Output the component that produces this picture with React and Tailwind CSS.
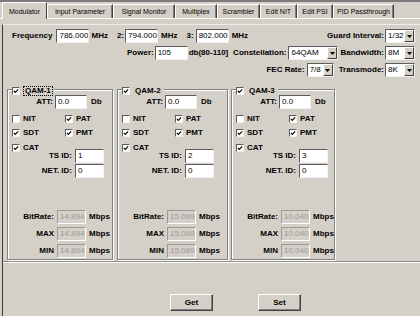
import React from "react";
import clsx from "clsx";

const tabs = [
  { name: "Modulator", w: "w-[45px]", active: true },
  { name: "Input Parameter", w: "w-[66px]" },
  { name: "Signal Monitor", w: "w-[62px]" },
  { name: "Multiplex", w: "w-[42px]" },
  { name: "Scrambler", w: "w-[43px]" },
  { name: "Edit NIT", w: "w-[37px]" },
  { name: "Edit PSI", w: "w-[36px]" },
  { name: "PID Passthrough", w: "w-[61px]" },
];

const groups = [
  { title: "QAM-1", focus: true, w: "w-[106px]", ts: "1", rate: "14.894" },
  { title: "QAM-2", w: "w-[111px]", ts: "2", rate: "15.089" },
  { title: "QAM-3", w: "w-[104px]", ts: "3", rate: "10.040" },
];

const sunken = "border border-t-[#5c5c5c] border-l-[#5c5c5c] border-b-[#f2f2f2] border-r-[#f2f2f2]";

const Field = ({ w, value, disabled }) => (
  <div
    className={clsx(
      "h-[14px] px-[2px] text-[8px] font-normal leading-[11px] whitespace-nowrap overflow-hidden",
      disabled
        ? "bg-[#d4d0c8] text-[#9a9a9a] border border-t-[#9a9a9a] border-l-[#9a9a9a] border-b-white border-r-white"
        : clsx("bg-white text-black", sunken),
      w
    )}
  >
    {value}
  </div>
);

const Select = ({ w, value }) => (
  <div className={clsx("h-[14px] flex bg-white", sunken, w)}>
    <span className="flex-1 pl-[2px] text-[8px] font-normal leading-[11px]">{value}</span>
    <span className="w-[10px] h-full bg-[#d4d0c8] border border-t-white border-l-white border-r-[#404040] border-b-[#404040] flex items-center justify-center">
      <svg width="5" height="3" viewBox="0 0 5 3">
        <path d="M0 0H5L2.5 3Z" fill="#000" />
      </svg>
    </span>
  </div>
);

const Check = ({ on }) => (
  <span className={clsx("w-[8px] h-[8px] bg-white flex items-center justify-center shrink-0", sunken)}>
    {on && (
      <svg viewBox="0 0 7 7" className="w-[6px] h-[6px]">
        <path d="M1 3.3 L2.7 5.2 L6 1.6" stroke="#000" strokeWidth="1.3" fill="none" />
      </svg>
    )}
  </span>
);

const CheckLabel = ({ on, label }) => (
  <div className="flex items-center gap-[3px] whitespace-nowrap">
    <Check on={on} />
    <span>{label}</span>
  </div>
);

const Group = ({ g }) => (
  <fieldset
    className={clsx(
      "border border-[#808080] shadow-[inset_1px_1px_0_#fff,1px_1px_0_#fff] pb-[1px]",
      g.w
    )}
  >
    <legend className="ml-[4px] h-[12px] pt-[3px] pr-[1px] flex items-center gap-[3px] bg-[#d4d0c8]">
      <Check on />
      <span className={clsx("leading-[8px] px-[1px]", g.focus ? "border border-dotted border-black" : "border border-transparent")}>
        {g.title}
      </span>
    </legend>

    <div className="flex items-center h-[14px]">
      <div className="w-[45px] text-right">ATT:</div>
      <div className="ml-[2px]">
        <Field w="w-[32px]" value="0.0" />
      </div>
      <div className="ml-[4px]">Db</div>
    </div>

    <div className="mt-[3px] flex items-center h-[14px] pl-[4px]">
      <div className="w-[53px]">
        <CheckLabel on={false} label="NIT" />
      </div>
      <CheckLabel on label="PAT" />
    </div>
    <div className="flex items-center h-[14px] pl-[4px]">
      <div className="w-[53px]">
        <CheckLabel on label="SDT" />
      </div>
      <CheckLabel on label="PMT" />
    </div>

    <div className="mt-[1px] flex items-start pl-[4px]">
      <div className="w-[25px] h-[14px] flex items-center">
        <CheckLabel on label="CAT" />
      </div>
      <div className="pt-[8px] flex flex-col gap-[1px]">
        <div className="flex items-center h-[14px]">
          <div className="w-[35px] flex justify-end whitespace-nowrap">TS ID:</div>
          <div className="ml-[3px]">
            <Field w="w-[29px]" value={g.ts} />
          </div>
        </div>
        <div className="flex items-center h-[14px]">
          <div className="w-[35px] flex justify-end whitespace-nowrap">NET. ID:</div>
          <div className="ml-[3px]">
            <Field w="w-[29px]" value="0" />
          </div>
        </div>
      </div>
    </div>

    <div className="mt-[32px] flex flex-col gap-[3px]">
      {["BitRate:", "MAX", "MIN"].map((l) => (
        <div key={l} className="flex items-center h-[14px]">
          <div className="w-[46px] text-right">{l}</div>
          <div className="ml-[3px]">
            <Field w="w-[29px]" value={g.rate} disabled />
          </div>
          <div className="ml-[3px]">Mbps</div>
        </div>
      ))}
    </div>
  </fieldset>
);

const Button = ({ label }) => (
  <button className="w-[43px] h-[17px] bg-[#d4d0c8] border border-t-white border-l-white border-r-[#404040] border-b-[#404040] shadow-[inset_-1px_-1px_0_#808080] text-[8px] font-bold">
    {label}
  </button>
);

const App = () => {
  return (
    <div className="w-[420px] h-[316px] bg-[#d4d0c8] overflow-hidden flex flex-col font-['Liberation_Sans',Arial,sans-serif] text-[8px] font-bold leading-none text-black">
      {/* tab strip */}
      <div className="h-[19px] shrink-0 border-t-2 border-t-[#7b7b7b] flex items-end pl-[2px] shadow-[inset_0_-1px_0_#fff]">
        {tabs.map((t) =>
          t.active ? (
            <div
              key={t.name}
              className={clsx(
                "h-[17px] flex items-center justify-center border-t border-l border-t-white border-l-white border-r border-r-[#404040] bg-[#d4d0c8] text-[7px] font-normal",
                t.w
              )}
            >
              {t.name}
            </div>
          ) : (
            <div
              key={t.name}
              className={clsx(
                "h-[14px] mb-[1px] flex items-center justify-center border-t border-l border-t-white border-l-white border-r border-r-[#404040] shadow-[inset_-1px_0_0_#808080] text-[7px] font-normal whitespace-nowrap",
                t.w
              )}
            >
              {t.name}
            </div>
          )
        )}
      </div>

      {/* frame */}
      <div className="mt-[5px] ml-[2px] flex-1 flex flex-col border-l border-t border-l-[#3a3a3a] border-t-[#ececec]">
        <div className="pt-[4px] pr-[5px]">
          <div className="flex items-center h-[14px]">
            <span className="ml-[9px]">Frequency</span>
            <div className="ml-[4px]">
              <Field w="w-[33px]" value="786.000" />
            </div>
            <span className="ml-[2px]">MHz</span>
            <span className="ml-[9px]">2:</span>
            <div className="ml-[1px]">
              <Field w="w-[33px]" value="794.000" />
            </div>
            <span className="ml-[3px]">MHz</span>
            <span className="ml-[9px]">3:</span>
            <div className="ml-[2px]">
              <Field w="w-[33px]" value="802.000" />
            </div>
            <span className="ml-[3px]">MHz</span>
            <div className="ml-auto flex items-center gap-[1px]">
              <span>Guard Interval:</span>
              <Select w="w-[30px]" value="1/32" />
            </div>
          </div>

          <div className="mt-[3px] flex items-center h-[14px]">
            <span className="ml-[124px]">Power:</span>
            <div className="ml-[1px]">
              <Field w="w-[33px]" value="105" />
            </div>
            <span className="ml-[1px]">db(80-110]</span>
            <div className="ml-auto flex items-center">
              <span>Constellation:</span>
              <div className="ml-[2px]">
                <Select w="w-[50px]" value="64QAM" />
              </div>
              <span className="ml-[2px]">Bandwidth:</span>
              <div className="ml-[1px]">
                <Select w="w-[30px]" value="8M" />
              </div>
            </div>
          </div>

          <div className="mt-[3px] flex items-center h-[14px] justify-end">
            <span>FEC Rate:</span>
            <div className="ml-[2px]">
              <Select w="w-[27px]" value="7/8" />
            </div>
            <span className="ml-[5px]">Transmode:</span>
            <div className="ml-[1px]">
              <Select w="w-[30px]" value="8K" />
            </div>
          </div>

          <div className="mt-[6px] ml-[4px] flex items-start">
            <Group g={groups[0]} />
            <div className="ml-[4px]">
              <Group g={groups[1]} />
            </div>
            <div className="ml-[3px]">
              <Group g={groups[2]} />
            </div>
          </div>
        </div>

        <div className="mt-[1px] h-px bg-[#8a8a8a] shadow-[0_1px_0_#fff]" />

        <div className="mt-[32px] flex pl-[167px] gap-[45px]">
          <Button label="Get" />
          <Button label="Set" />
        </div>
      </div>
    </div>
  );
};

export default App;
